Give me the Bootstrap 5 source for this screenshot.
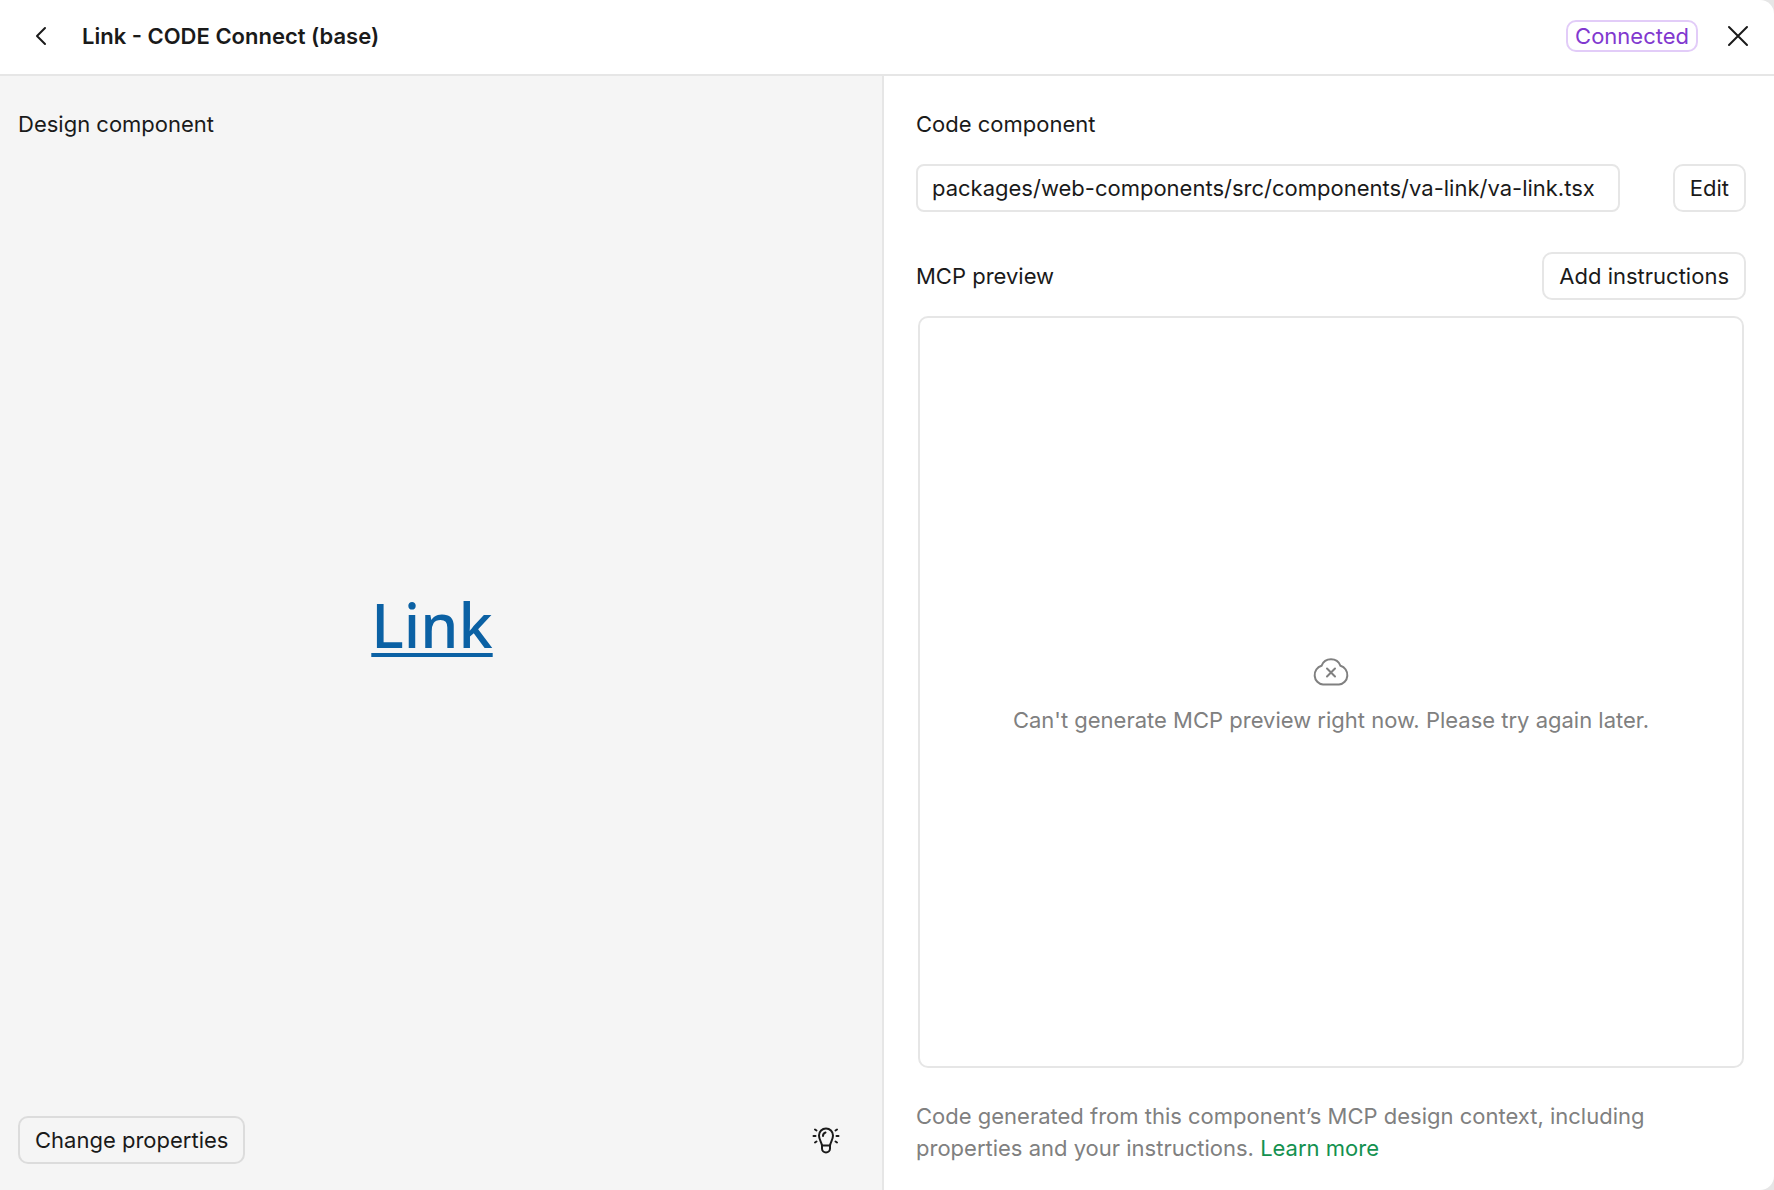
<!DOCTYPE html>
<html lang="en">
<head>
<meta charset="utf-8">
<meta name="viewport" content="width=device-width, initial-scale=1">
<title>Link - CODE Connect (base)</title>
<link href="https://cdn.jsdelivr.net/npm/bootstrap@5.3.0/dist/css/bootstrap.min.css" rel="stylesheet">
<style>
  body { font-family: Inter, "Liberation Sans", sans-serif; font-size: 22px; line-height: 32px; color: #1a1a1a; background: #e6e6e6; }
  .dialog-shell { background: #fff; border-radius: 0 14px 14px 0; overflow: hidden; }
  .dialog-head { height: 76px; padding: 0 20px 2px 24px; border-bottom: 2px solid #e6e6e6; }
  .dialog-title { font-size: 22px; line-height: 32px; font-weight: 600; margin-left: 26px; }
  .icon-btn { width: 32px; height: 32px; padding: 0; border: 0; background: none; color: inherit; display: flex; align-items: center; justify-content: center; }
  .status-chip { border: 2px solid #e2ccf8; border-radius: 10px; color: #8138cf; padding: 0 7px; line-height: 28px; margin-right: 24px; }
  .design-pane { width: calc(50% - 3px); background: #f5f5f5; border-right: 2px solid #e6e6e6; padding: 32px 24px 26px 18px; }
  .design-stage { padding: 0 12px 6px 0; }
  .code-pane { min-width: 0; padding: 32px 28px 26px 32px; }
  .pane-title { font-size: 22px; line-height: 32px; font-weight: 400; margin: 0; display: block; }
  .sample-link { font-family: "Noto Sans", sans-serif; font-size: 61px; font-weight: 500; line-height: 80px; color: #0b61a4; text-decoration-thickness: 4px; text-underline-offset: 5px; text-decoration-skip-ink: none; }
  .sample-link:hover { color: #1a4480; }
  .btn-line { --bs-btn-font-size: 22px; --bs-btn-line-height: 32px; --bs-btn-padding-y: 6px; --bs-btn-padding-x: 15px; --bs-btn-border-width: 2px; --bs-btn-border-radius: 10px; --bs-btn-color: #1a1a1a; --bs-btn-border-color: #e6e6e6; --bs-btn-hover-bg: #f0f0f0; --bs-btn-hover-border-color: #dcdcdc; white-space: nowrap; }
  .design-pane .btn-line { --bs-btn-border-color: #dcdcdc; }
  .path-row { gap: 53px; margin-top: 24px; }
  .path-field { font-size: 22px; line-height: 32px; height: 48px; padding: 6px 14px; border: 2px solid #e6e6e6; border-radius: 8px; color: #1a1a1a; min-width: 0; }
  .preview-row { margin: 40px 0 16px; }
  .preview-box { border: 2px solid #e6e6e6; border-radius: 10px; margin: 0 2px; padding-top: 8px; color: #808080; }
  .footnote { color: #808080; margin: 32px 0 0; }
  .footnote a { color: #14914f; text-decoration: none; }
</style>
<script src="https://cdn.jsdelivr.net/npm/bootstrap@5.3.0/dist/js/bootstrap.bundle.min.js"></script>
</head>
<body>
<div class="dialog-shell d-flex flex-column min-vh-100">
  <header class="dialog-head d-flex align-items-center">
    <button class="icon-btn" type="button" aria-label="Back">
      <svg width="32" height="32" viewBox="0 0 32 32" fill="none" stroke="currentColor" stroke-width="2" stroke-linecap="round" stroke-linejoin="round"><path d="M21 8l-8 8 8 8"/></svg>
    </button>
    <h1 class="dialog-title mb-0 me-auto">Link - CODE Connect (base)</h1>
    <span class="status-chip">Connected</span>
    <button class="icon-btn" type="button" aria-label="Close">
      <svg width="32" height="32" viewBox="0 0 32 32" fill="none" stroke="currentColor" stroke-width="2" stroke-linecap="round"><path d="M7 7l18 18M25 7L7 25"/></svg>
    </button>
  </header>
  <main class="d-flex flex-grow-1">
    <section class="design-pane d-flex flex-column flex-shrink-0">
      <h2 class="pane-title">Design component</h2>
      <div class="design-stage flex-grow-1 d-flex align-items-center justify-content-center">
        <a class="sample-link" href="#">Link</a>
      </div>
      <div class="d-flex align-items-center justify-content-between">
        <button class="btn btn-line" type="button">Change properties</button>
        <button class="icon-btn me-3" type="button" aria-label="Tips">
          <svg width="32" height="32" viewBox="0 0 32 32" fill="none" stroke="currentColor" stroke-width="2" stroke-linecap="round" stroke-linejoin="round">
            <path d="M12 21.500C11.500 18 9 15.500 9 11.500a7 7 0 0 1 14 0c0 4-2.500 6.500-3 10z"/>
            <path d="M12 21.500v3a4 4 0 0 0 8 0v-3M13 12a3.500 3.500 0 0 1 2.500-3.500"/>
            <path d="M5 5.500l1.500 1M3.500 12h2M5 18.500l1.500-1M27 5.500l-1.500 1M28.500 12h-2M27 18.500l-1.500-1"/>
          </svg>
        </button>
      </div>
    </section>
    <section class="code-pane d-flex flex-column flex-grow-1">
      <label class="pane-title" for="sourcePath">Code component</label>
      <div class="path-row d-flex">
        <input class="path-field flex-grow-1" id="sourcePath" type="text" readonly value="packages/web-components/src/components/va-link/va-link.tsx">
        <button class="btn btn-line" type="button">Edit</button>
      </div>
      <div class="preview-row d-flex align-items-center justify-content-between">
        <h2 class="pane-title">MCP preview</h2>
        <button class="btn btn-line" type="button">Add instructions</button>
      </div>
      <div class="preview-box flex-grow-1 d-flex flex-column align-items-center justify-content-center text-center">
        <svg class="mb-3" width="40" height="32" viewBox="0 0 40 32" fill="none" stroke="currentColor" stroke-width="2" stroke-linecap="round" stroke-linejoin="round">
          <path d="M12 28.500A9 9.500 0 0 1 10.500 9.800A10.200 10.200 0 0 1 29.500 9.800A9 9.500 0 0 1 28 28.500z"/>
          <path d="M16 12.500l8 8M24 12.500l-8 8"/>
        </svg>
        <div>Can't generate MCP preview right now. Please try again later.</div>
      </div>
      <p class="footnote">Code generated from this component’s MCP design context, including properties and your instructions. <a href="#">Learn more</a></p>
    </section>
  </main>
</div>
</body>
</html>
